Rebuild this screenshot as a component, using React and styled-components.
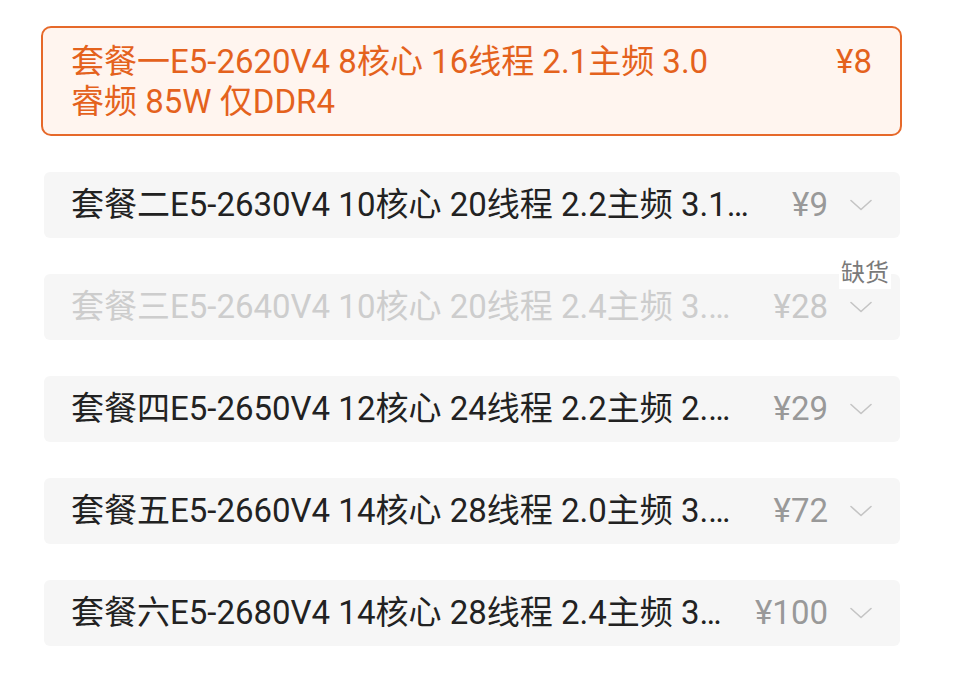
import styled, { createGlobalStyle } from "styled-components";

const GlobalStyle = createGlobalStyle`
  body {
    margin: 0;
    background: #ffffff;
    font-family: Roboto, "Noto Sans CJK SC", sans-serif;
  }
`;

const options = [
  {
    name: "套餐一E5-2620V4 8核心 16线程 2.1主频 3.0 睿频 85W 仅DDR4",
    price: "¥8",
    selected: true,
  },
  { name: "套餐二E5-2630V4 10核心 20线程 2.2主频 3.1睿频 85W 仅DDR4", price: "¥9" },
  {
    name: "套餐三E5-2640V4 10核心 20线程 2.4主频 3.4睿频 90W 仅DDR4",
    price: "¥28",
    soldOut: true,
  },
  { name: "套餐四E5-2650V4 12核心 24线程 2.2主频 2.9睿频 105W 仅DDR4", price: "¥29" },
  { name: "套餐五E5-2660V4 14核心 28线程 2.0主频 3.2睿频 105W 仅DDR4", price: "¥72" },
  { name: "套餐六E5-2680V4 14核心 28线程 2.4主频 3.3睿频 120W 仅DDR4", price: "¥100" },
];

export default function App() {
  return (
    <>
      <GlobalStyle />
      <Page>
        <List>
          {options.map((o) => (
            <Option key={o.name} $selected={o.selected} $disabled={o.soldOut}>
              <Title $selected={o.selected}>{o.name}</Title>
              <Price $selected={o.selected} $disabled={o.soldOut}>
                {o.price}
              </Price>
              {!o.selected && (
                <Chevron viewBox="0 0 22 12">
                  <path d="M1 1.5 L11 10.5 L21 1.5" />
                </Chevron>
              )}
              {o.soldOut && <Tag>缺货</Tag>}
            </Option>
          ))}
        </List>
      </Page>
    </>
  );
}

const Page = styled.div`
  padding: 26px 76px 20px 41px;
`;

const List = styled.div`
  display: flex;
  flex-direction: column;
  gap: 36px;
  width: 861px;
`;

const Option = styled.div`
  position: relative;
  display: flex;
  align-items: ${(p) => (p.$selected ? "flex-start" : "center")};
  min-height: 66px;
  box-sizing: border-box;
  margin: ${(p) => (p.$selected ? "0" : "0 2px 0 3px")};
  padding: ${(p) => (p.$selected ? "14px 28px 12px 28px" : "0 28px 0 27px")};
  border-radius: ${(p) => (p.$selected ? "10px" : "6px")};
  border: ${(p) => (p.$selected ? "2px solid #e6692a" : "none")};
  background: ${(p) => (p.$selected ? "#fff5ef" : "#f6f6f6")};
  color: ${(p) => (p.$selected ? "#e4621d" : p.$disabled ? "#cdcdcd" : "#222222")};
  font-size: 33px;
  line-height: 40px;
`;

const Title = styled.div`
  flex: 1;
  min-width: 0;
  ${(p) =>
    p.$selected
      ? `max-width: 650px; margin-right: auto;`
      : `white-space: nowrap; overflow: hidden; text-overflow: ellipsis;`}
`;

const Price = styled.div`
  flex: none;
  margin-left: ${(p) => (p.$selected ? "40px" : "30px")};
  color: ${(p) => (p.$selected ? "#e4621d" : p.$disabled ? "#c8c8c8" : "#999999")};
`;

const Chevron = styled.svg`
  flex: none;
  width: 22px;
  height: 12px;
  margin-left: 22px;
  fill: none;
  stroke: #c4c4c4;
  stroke-width: 1.6;
  stroke-linecap: round;
  stroke-linejoin: round;
`;

const Tag = styled.span`
  position: absolute;
  top: -16px;
  right: 9px;
  padding: 0 2px;
  background: #ffffff;
  color: #7a7a7a;
  font-size: 24px;
  line-height: 31px;
`;
